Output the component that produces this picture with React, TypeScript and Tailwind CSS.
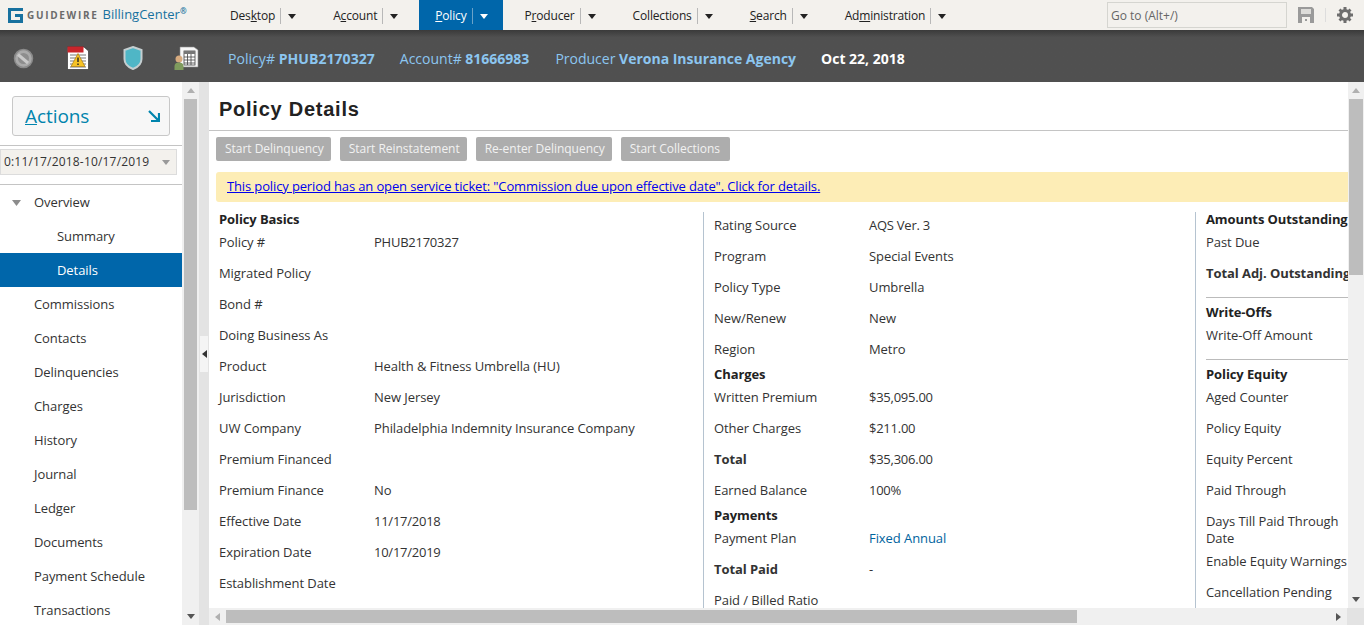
const navItems = [
  { pre: "Des", key: "k", post: "top" },
  { pre: "A", key: "c", post: "count" },
  { pre: "", key: "P", post: "olicy", active: true },
  { pre: "P", key: "r", post: "oducer" },
  { pre: "Collections", key: "", post: "" },
  { pre: "", key: "S", post: "earch" },
  { pre: "Ad", key: "m", post: "inistration" },
];

const sideItems = [
  "Commissions",
  "Contacts",
  "Delinquencies",
  "Charges",
  "History",
  "Journal",
  "Ledger",
  "Documents",
  "Payment Schedule",
  "Transactions",
];

const buttons = ["Start Delinquency", "Start Reinstatement", "Re-enter Delinquency", "Start Collections"];

type Row = { type?: string; label?: string; value?: string; bold?: boolean; link?: boolean };

const col1: Row[] = [
  { type: "head", label: "Policy Basics" },
  { label: "Policy #", value: "PHUB2170327" },
  { label: "Migrated Policy" },
  { label: "Bond #" },
  { label: "Doing Business As" },
  { label: "Product", value: "Health & Fitness Umbrella (HU)" },
  { label: "Jurisdiction", value: "New Jersey" },
  { label: "UW Company", value: "Philadelphia Indemnity Insurance Company" },
  { label: "Premium Financed" },
  { label: "Premium Finance", value: "No" },
  { label: "Effective Date", value: "11/17/2018" },
  { label: "Expiration Date", value: "10/17/2019" },
  { label: "Establishment Date" },
];

const col2: Row[] = [
  { label: "Rating Source", value: "AQS Ver. 3" },
  { label: "Program", value: "Special Events" },
  { label: "Policy Type", value: "Umbrella" },
  { label: "New/Renew", value: "New" },
  { label: "Region", value: "Metro" },
  { type: "head", label: "Charges" },
  { label: "Written Premium", value: "$35,095.00" },
  { label: "Other Charges", value: "$211.00" },
  { label: "Total", value: "$35,306.00", bold: true },
  { label: "Earned Balance", value: "100%" },
  { type: "head", label: "Payments" },
  { label: "Payment Plan", value: "Fixed Annual", link: true },
  { label: "Total Paid", value: "-", bold: true },
  { label: "Paid / Billed Ratio" },
];

const col3: Row[] = [
  { type: "head", label: "Amounts Outstanding" },
  { label: "Past Due" },
  { label: "Total Adj. Outstanding", bold: true },
  { type: "sep" },
  { type: "head", label: "Write-Offs" },
  { label: "Write-Off Amount" },
  { type: "sep" },
  { type: "head", label: "Policy Equity" },
  { label: "Aged Counter" },
  { label: "Policy Equity" },
  { label: "Equity Percent" },
  { label: "Paid Through" },
  { label: "Days Till Paid Through Date" },
  { label: "Enable Equity Warnings" },
  { label: "Cancellation Pending" },
];

const DetailColumn = ({ rows, labelWidth }: { rows: Row[]; labelWidth: string }) => (
  <div className="flex flex-col">
    {rows.map((row, i) => {
      if (row.type === "head") {
        return (
          <div key={i} className="h-[17px] text-[13px] leading-[15px] font-bold tracking-[-0.1px] whitespace-nowrap text-[#222]">
            {row.label}
          </div>
        );
      }
      if (row.type === "sep") {
        return (
          <div key={i} className="flex h-[14px] items-center">
            <div className="mt-[-2px] h-px w-full bg-[#bbbbbb]" />
          </div>
        );
      }
      return (
        <div key={i} className="flex min-h-[31px] pt-[5px] pb-px text-[13px] leading-[17px] tracking-[-0.07px] text-[#333]">
          <div className={`${labelWidth} shrink-0 ${row.bold ? "font-bold whitespace-nowrap" : ""}`}>{row.label}</div>
          {row.value && (
            <div
              className={`whitespace-nowrap ${row.link ? "text-[#00639e]" : ""} ${
                /\d/.test(row.value) ? "tracking-[-0.25px]" : ""
              }`}
            >
              {row.value}
            </div>
          )}
        </div>
      );
    })}
  </div>
);

const Tri = ({ dir, color = "#777777" }: { dir: "up" | "down" | "left" | "right"; color?: string }) => {
  const pts = {
    up: "0,5 4,0 8,5",
    down: "0,0 8,0 4,5",
    left: "5,0 5,8 0,4",
    right: "0,0 0,8 5,4",
  }[dir];
  const w = dir === "up" || dir === "down" ? 8 : 5;
  const h = dir === "up" || dir === "down" ? 5 : 8;
  return (
    <svg width={w} height={h} viewBox={`0 0 ${w} ${h}`} className="shrink-0">
      <polygon points={pts} fill={color} />
    </svg>
  );
};

const Logo = () => (
  <svg width="15" height="15" viewBox="0 0 15 15" className="shrink-0">
    <path d="M0 0H15V3H3V12H12V9H7V6H15V15H0Z" fill="#17719f" />
  </svg>
);

const BlockedIcon = () => (
  <svg width="21" height="21" viewBox="0 0 21 21">
    <circle cx="10.5" cy="10.5" r="9" fill="#aaaaaa" stroke="#8a8a8a" strokeWidth="1.5" />
    <circle cx="10.5" cy="10.5" r="5.5" fill="#8d8d8d" />
    <path d="M5 6.5L15 15" stroke="#c9c9c9" strokeWidth="3" />
  </svg>
);

const TicketIcon = () => (
  <svg width="22" height="24" viewBox="0 0 22 24">
    <path d="M0.5 1H17L21.5 5V23.5H0.5Z" fill="#ffffff" stroke="#222222" strokeWidth="0.6" />
    <rect x="0.5" y="0.5" width="16" height="6" fill="#c9252b" />
    <path d="M3 9H19M3 12H19M3 15H19M3 18H19M3 21H19" stroke="#555555" strokeWidth="0.8" />
    <path d="M11 7.5L18 20.5H4Z" fill="#f7c325" stroke="#a87a10" strokeWidth="0.7" />
    <path d="M11 11.5V16M11 17.5V19" stroke="#222222" strokeWidth="1.4" />
  </svg>
);

const ShieldIcon = () => (
  <svg width="20" height="24" viewBox="0 0 20 24">
    <path d="M10 1L18.5 4V13C18.5 18 14 21.5 10 23C6 21.5 1.500 18 1.500 13V4Z" fill="#4fb6c6" stroke="#c4ced0" strokeWidth="2" />
  </svg>
);

const PersonCalcIcon = () => (
  <svg width="25" height="25" viewBox="0 0 25 25">
    <path d="M6 1H20L24 4V21H6Z" fill="#f7f7f7" stroke="#8a8a8a" strokeWidth="0.6" />
    <rect x="10" y="5" width="11" height="14" fill="#ffffff" stroke="#444444" strokeWidth="0.8" />
    <rect x="10" y="5" width="11" height="3" fill="#777777" />
    <path d="M10 11H21M10 14H21M10 17H21M13.500 8V19M17 8V19" stroke="#444444" strokeWidth="0.8" />
    <circle cx="5" cy="13" r="3.500" fill="#d7ab7f" />
    <path d="M0.500 24V20C0.500 17.500 2.500 16.500 5 16.500C7.500 16.500 9.500 17.500 9.500 20V24Z" fill="#7f9b5d" />
  </svg>
);

const SaveIcon = () => (
  <svg width="16" height="16" viewBox="0 0 16 16">
    <path d="M0 0H14L16 2V16H0Z" fill="#9a9a9a" />
    <rect x="3" y="2" width="10" height="5" fill="#f3f1ed" opacity="0.75" />
    <rect x="4" y="10" width="8" height="6" fill="#f3f1ed" />
    <rect x="7" y="12" width="2" height="2" fill="#9a9a9a" />
  </svg>
);

const GearIcon = () => (
  <svg width="16" height="16" viewBox="0 0 16 16">
    <path
      d="M6.500 0H9.500V3H6.500ZM6.500 13H9.500V16H6.500ZM0 6.500H3V9.500H0ZM13 6.500H16V9.500H13ZM1.500 3.500L3.500 1.500L5.500 3.500L3.500 5.500ZM10.500 3.500L12.500 1.500L14.500 3.500L12.500 5.500ZM1.500 12.500L3.500 10.500L5.500 12.500L3.500 14.500ZM10.500 12.500L12.500 10.500L14.500 12.500L12.500 14.500Z"
      fill="#6e6e6e"
    />
    <circle cx="8" cy="8" r="4.500" fill="none" stroke="#6e6e6e" strokeWidth="3" />
  </svg>
);

const App = () => {
  return (
    <div className="flex h-[625px] w-[1364px] flex-col overflow-hidden bg-white font-['Open_Sans',sans-serif]">
      {/* Top menu */}
      <div className="flex h-[30px] shrink-0 items-center bg-[#f3f1ed]">
        <div className="flex w-[214px] shrink-0 items-center pl-2">
          <Logo />
          <span className="ml-[4px] text-[10px] font-bold tracking-[1.7px] text-[#6b6b6b]">GUIDEWIRE</span>
          <span className="ml-[4px] text-[13px] text-[#17719f]">BillingCenter</span>
          <span className="mb-2 text-[8px] font-bold text-[#17719f]">®</span>
        </div>
        <div className="flex h-full gap-[6px]">
          {navItems.map((item, i) => (
            <div
              key={i}
              className={`flex h-full items-center pt-[2px] pr-[15px] pl-[16px] text-[12px] tracking-[-0.17px] ${
                item.active ? "bg-[#0066aa] text-white" : "text-[#222]"
              }`}
            >
              <span className="whitespace-nowrap">
                {item.pre}
                <span className="underline">{item.key}</span>
                {item.post}
              </span>
              <span className={`mr-[7px] ml-[5px] h-[16px] w-px ${item.active ? "bg-[#6aa2c8]" : "bg-[#b8b8b8]"}`} />
              <Tri dir="down" color={item.active ? "#ffffff" : "#222222"} />
            </div>
          ))}
        </div>
        <div className="ml-auto flex items-center">
          <div className="flex h-[26px] w-[180px] items-center border border-[#d5d5d0] px-[3px] pt-[2px] text-[12px] text-[#666]">
            Go to (Alt+/)
          </div>
          <div className="ml-[11px] flex">
            <SaveIcon />
          </div>
          <div className="mx-[11px] h-[14px] w-px bg-[#dddddd]" />
          <div className="mr-[11px] flex">
            <GearIcon />
          </div>
        </div>
      </div>

      {/* Info bar */}
      <div className="flex h-[52px] shrink-0 items-center bg-linear-to-b from-[#3a3a3a] to-[#505050] to-[14%] pt-[4px] text-[14px]">
        <div className="ml-[13px] flex">
          <BlockedIcon />
        </div>
        <div className="ml-[33px] flex">
          <TicketIcon />
        </div>
        <div className="ml-[34px] flex">
          <ShieldIcon />
        </div>
        <div className="ml-[31px] flex">
          <PersonCalcIcon />
        </div>
        <div className="ml-[29px] tracking-[0.05px] text-[#8cc6f0]">
          Policy# <span className="font-bold">PHUB2170327</span>
        </div>
        <div className="ml-[25px] text-[#8cc6f0]">
          Account# <span className="font-bold">81666983</span>
        </div>
        <div className="ml-[26px] text-[#8cc6f0]">
          Producer <span className="font-bold">Verona Insurance Agency</span>
        </div>
        <div className="ml-[25px] font-bold text-white">Oct 22, 2018</div>
      </div>

      <div className="flex min-h-0 flex-1">
        {/* Sidebar */}
        <div className="flex w-[182px] shrink-0 flex-col overflow-hidden text-[13px] tracking-[-0.07px] text-[#333]">
          <div className="mt-[14px] ml-[12px] flex h-[40px] w-[158px] shrink-0 items-center justify-between rounded-[3px] border border-[#c8c8c8] bg-[#f7f7f7] pr-[9px] pl-[12px]">
            <span className="text-[19px] text-[#0084ad]">
              <span className="underline">A</span>ctions
            </span>
            <svg width="12" height="12" viewBox="0 0 12 12">
              <path d="M1 1L10 10M11 3V11H3" fill="none" stroke="#0084ad" strokeWidth="2.200" />
            </svg>
          </div>
          <div className="mt-[9px] h-px shrink-0 bg-[#c4c4c4]" />
          <div className="mt-[3px] flex h-[26px] w-[177px] shrink-0 items-center justify-between border border-[#dcdcdc] bg-[#f3f1ed] pr-[6px] pl-[3px] text-[12px] tracking-[0.18px]">
            <span className="whitespace-nowrap">0:11/17/2018-10/17/2019</span>
            <Tri dir="down" color="#999999" />
          </div>
          <div className="mt-[9px] h-px shrink-0 bg-[#c4c4c4]" />
          <div className="flex h-[34px] shrink-0 items-center pt-[2px] pl-[12px]">
            <svg width="9" height="6" viewBox="0 0 9 6" className="shrink-0">
              <polygon points="0,0 9,0 4.500,6" fill="#8c8c8c" />
            </svg>
            <span className="ml-[13px]">Overview</span>
          </div>
          <div className="flex h-[34px] shrink-0 items-center pt-[2px] pl-[57px]">Summary</div>
          <div className="flex h-[34px] shrink-0 items-center bg-[#0066aa] pt-[2px] pl-[57px] text-white">Details</div>
          {sideItems.map((item) => (
            <div key={item} className="flex h-[34px] shrink-0 items-center pt-[2px] pl-[34px]">
              {item}
            </div>
          ))}
        </div>

        {/* Sidebar scrollbar */}
        <div className="flex w-[17px] shrink-0 flex-col items-center bg-[#f0f0f0]">
          <div className="flex h-[17px] items-center">
            <Tri dir="up" color="#b0b0b0" />
          </div>
          <div className="h-[411px] w-[13px] bg-[#bdbdbd]" />
          <div className="mt-auto flex h-[17px] items-center">
            <Tri dir="down" color="#555555" />
          </div>
        </div>

        {/* Splitter */}
        <div className="flex w-[10px] shrink-0 flex-col justify-center bg-[#e3e3e3]">
          <div className="ml-px flex h-[36px] w-[8px] items-center justify-center bg-[#f4f4f4]">
            <Tri dir="left" color="#333333" />
          </div>
        </div>

        {/* Main */}
        <div className="flex min-w-0 flex-1 flex-col">
          <div className="flex min-h-0 flex-1">
            <div className="min-w-0 flex-1 overflow-hidden">
              <div className="h-[49px] border-b border-[#c4c4c4] pt-[13px] pl-[10px] font-['Liberation_Sans',sans-serif] text-[20px] leading-[28px] font-bold tracking-[0.75px] text-[#222]">
                Policy Details
              </div>
              <div className="mt-[6px] ml-[7px] flex gap-[9px]">
                {buttons.map((label) => (
                  <div
                    key={label}
                    className="flex h-[24px] items-center rounded-[2px] bg-[#adadad] pr-[7px] pl-[9px] text-[12px] tracking-[-0.03px] whitespace-nowrap text-[#f2f2f2] last:pr-[10px]"
                  >
                    {label}
                  </div>
                ))}
              </div>
              <div className="mt-[11px] ml-[7px] flex h-[30px] items-center rounded-l-[3px] bg-[#fdedb6] pl-[11px] text-[13px] tracking-[-0.13px] text-[#0000ee] underline">
                This policy period has an open service ticket: "Commission due upon effective date". Click for details.
              </div>
              <div className="mt-[10px] flex w-[1300px]">
                <div className="w-[495px] shrink-0 border-r border-[#b5c3d0] pl-[10px]">
                  <DetailColumn rows={col1} labelWidth="w-[155px]" />
                </div>
                <div className="w-[492px] shrink-0 border-r border-[#b5c3d0] pl-[10px]">
                  <DetailColumn rows={col2} labelWidth="w-[155px]" />
                </div>
                <div className="w-[170px] shrink-0 pl-[10px]">
                  <DetailColumn rows={col3} labelWidth="w-[150px]" />
                </div>
              </div>
            </div>
            {/* Vertical scrollbar */}
            <div className="flex w-[16px] shrink-0 flex-col items-center bg-[#f0f0f0]">
              <div className="flex h-[17px] items-center">
                <Tri dir="up" color="#b0b0b0" />
              </div>
              <div className="h-[176px] w-[14px] bg-[#bdbdbd]" />
              <div className="mt-auto flex h-[17px] items-center">
                <Tri dir="down" color="#555555" />
              </div>
            </div>
          </div>
          {/* Horizontal scrollbar */}
          <div className="flex h-[17px] shrink-0 items-center bg-[#f0f0f0]">
            <div className="flex w-[17px] justify-center">
              <Tri dir="left" color="#b0b0b0" />
            </div>
            <div className="h-[13px] w-[851px] bg-[#bdbdbd]" />
            <div className="ml-auto flex w-[17px] justify-center">
              <Tri dir="right" color="#555555" />
            </div>
            <div className="h-full w-[17px] bg-[#e3e3e3]" />
          </div>
        </div>
      </div>
    </div>
  );
};

export default App;
